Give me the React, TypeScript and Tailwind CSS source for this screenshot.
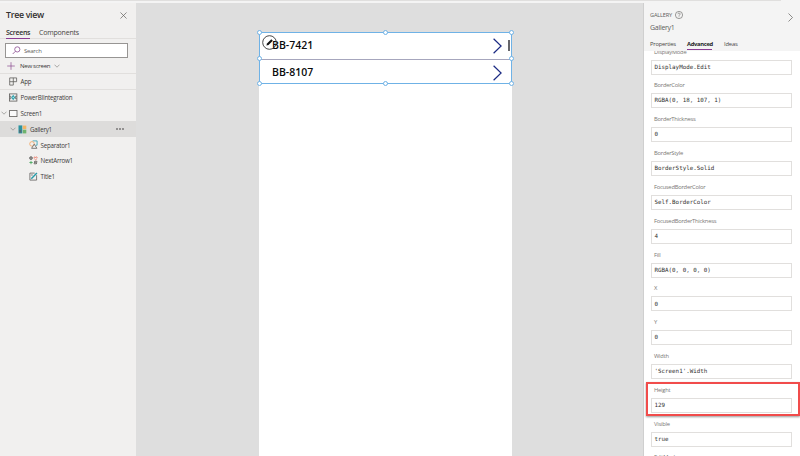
import type { ReactNode } from "react";

const ui = "font-['Open_Sans','Noto_Sans',sans-serif]";

const fields: [string, string][] = [
  ["DisplayMode", "DisplayMode.Edit"],
  ["BorderColor", "RGBA(0, 18, 107, 1)"],
  ["BorderThickness", "0"],
  ["BorderStyle", "BorderStyle.Solid"],
  ["FocusedBorderColor", "Self.BorderColor"],
  ["FocusedBorderThickness", "4"],
  ["Fill", "RGBA(0, 0, 0, 0)"],
  ["X", "0"],
  ["Y", "0"],
  ["Width", "'Screen1'.Width"],
  ["Height", "129"],
  ["Visible", "true"],
  ["EditMode", ""],
];

function Chevron({ className = "" }: { className?: string }) {
  return (
    <svg viewBox="0 0 6 4" className={`h-1 w-1.5 shrink-0 ${className}`} fill="none" stroke="#8a8886" strokeWidth=".7">
      <path d="M.5 .7 3 3.2 5.5 .7" />
    </svg>
  );
}

function Icon({ children }: { children: ReactNode }) {
  return (
    <svg viewBox="0 0 9 9" className="size-[9px] shrink-0" fill="none" stroke="#605e5c" strokeWidth=".8">
      {children}
    </svg>
  );
}

function AppIcon() {
  return (
    <Icon>
      <path d="M.7 .9h6.9v3.8H.7M.7 .9v7.2h3.6V.9" />
    </Icon>
  );
}

function IntegrationIcon() {
  return (
    <Icon>
      <rect x=".5" y=".9" width="7.4" height="7.2" />
      <path d="M.5 3.2h1.3v2.6H.5M7.9 3.2H6.6v2.6h1.3" />
      <path d="M4.2 1.8 6.2 4.5 4.2 7.2 2.2 4.5z" fill="#2aa0ac" stroke="none" />
      <circle cx="4.2" cy="4.5" r=".7" fill="#c7eef0" stroke="none" />
    </Icon>
  );
}

function ScreenIcon() {
  return (
    <Icon>
      <rect x=".6" y="1.4" width="7.4" height="6.2" fill="#fafafa" />
    </Icon>
  );
}

function GalleryIcon() {
  return (
    <Icon>
      <g stroke="none">
        <rect x=".5" y=".4" width="3.8" height="8" fill="#2b93a0" />
        <rect x="1.2" y="5" width="2.2" height="2.6" fill="#5a6672" />
        <rect x="4.8" y=".6" width="3.5" height="3.5" fill="#f2b565" />
        <rect x="4.8" y="4.7" width="3.5" height="3.7" fill="#6fb36c" />
      </g>
    </Icon>
  );
}

function ShapesIcon() {
  return (
    <Icon>
      <path d="M3.6 .9h4.5v4.3H6.6" stroke="#2a9dad" />
      <circle cx="3" cy="3.9" r="2.3" stroke="#f0a35e" />
      <path d="M5.2 4.2 7.9 8.3H2.6z" fill="#f3f2f1" />
    </Icon>
  );
}

function ArrowsIcon() {
  return (
    <Icon>
      <circle cx="2" cy="2.1" r="1.4" fill="#605e5c" fillOpacity=".6" />
      <path d="M4.9 2.2c0-1.4 1.3-1.7 1.7-.7.5-1 1.8-.6 1.7.6M5.3 2.7l1.3 1.2 1.3-1.2" stroke="#e8654f" />
      <path d="M2 4.9v3.3M.4 6.5h3.3" stroke="#3da254" />
      <path d="M5.1 7.8h2.2l.7-2.5H5.8zM5 5.6l2.9 2" />
    </Icon>
  );
}

function TitleIcon() {
  return (
    <Icon>
      <path d="M7.6 3.2v4.9H.9V1.1h4.8" />
      <path d="M2.3 6.8 7.9.9" stroke="#259aa8" strokeWidth="1.4" />
      <path d="M2.1 3h1.7" />
    </Icon>
  );
}

function TreeRow({
  icon,
  label,
  pad,
  chevron,
  line,
  selected,
}: {
  icon: ReactNode;
  label: string;
  pad: string;
  chevron?: boolean;
  line?: boolean;
  selected?: boolean;
}) {
  return (
    <div
      className={`flex h-[15.75px] shrink-0 items-center ${pad} ${line ? "border-b border-[#e1dfdd]" : ""} ${
        selected ? "bg-[#dddcdb]" : ""
      }`}
    >
      {chevron && <Chevron className="mr-0.5" />}
      {icon}
      <span className="ml-[3px] pt-[0.6px] text-[6.2px] tracking-[-0.22px] text-[#3b3a39]">{label}</span>
      {selected && (
        <svg viewBox="0 0 8 2" className="mr-[12px] ml-auto h-[2px] w-[8px]" fill="#323130">
          <circle cx="1" cy="1" r=".8" />
          <circle cx="4" cy="1" r=".8" />
          <circle cx="7" cy="1" r=".8" />
        </svg>
      )}
    </div>
  );
}

function TreePanel() {
  return (
    <aside className="flex w-[136px] shrink-0 flex-col bg-[#f1f0ef]">
      <header className="flex h-[23px] items-center justify-between pr-[9px] pl-[6px]">
        <h1 className="pt-[3px] text-[8.8px] font-semibold tracking-[-0.3px] text-[#323130]">Tree view</h1>
        <svg viewBox="0 0 6 6" className="mt-[2px] size-[7px]" stroke="#605e5c" strokeWidth=".6">
          <path d="M.4.4 5.6 5.6M5.6.4.4 5.6" />
        </svg>
      </header>
      <nav className="flex h-[13px] gap-[9px] border-b border-[#e1dfdd] pl-[6px] text-[7px] leading-[13px] text-[#484644]">
        <span className="h-[13px] w-6 border-b border-[#8a3c93] font-semibold tracking-[-0.3px] whitespace-nowrap text-[#323130]">
          Screens
        </span>
        <span className="tracking-[-0.2px]">Components</span>
      </nav>
      <div className="mt-[4px] ml-[5px] flex h-[15px] w-[123px] shrink-0 items-center border border-[#979593] bg-white pl-[6px]">
        <svg viewBox="0 0 9 9" className="size-[9px]" fill="none" stroke="#8a4b91" strokeWidth=".8">
          <circle cx="5.3" cy="3.4" r="2.6" />
          <path d="M3.4 5.3.7 8" />
        </svg>
        <span className="ml-[3px] pt-px text-[6px] tracking-[-0.22px] text-[#605e5c]">Search</span>
      </div>
      <div className="flex h-[16px] shrink-0 items-center border-b border-[#e1dfdd] pl-[7px] text-[6.1px] text-[#3b3a39]">
        <svg viewBox="0 0 8 8" className="size-2" stroke="#8a4b91" strokeWidth=".7">
          <path d="M4 .2v7.6M.2 4h7.6" />
        </svg>
        <span className="ml-[5px] pt-px tracking-[-0.3px]">New screen</span>
        <Chevron className="ml-[4px]" />
      </div>
      <TreeRow icon={<AppIcon />} label="App" pad="pl-[8.5px]" line />
      <TreeRow icon={<IntegrationIcon />} label="PowerBIIntegration" pad="pl-[8.5px]" />
      <TreeRow icon={<ScreenIcon />} label="Screen1" pad="pl-[0.5px]" chevron />
      <TreeRow icon={<GalleryIcon />} label="Gallery1" pad="pl-[10px]" chevron selected />
      <TreeRow icon={<ShapesIcon />} label="Separator1" pad="pl-[28.5px]" />
      <TreeRow icon={<ArrowsIcon />} label="NextArrow1" pad="pl-[28.5px]" />
      <TreeRow icon={<TitleIcon />} label="Title1" pad="pl-[28.5px]" />
    </aside>
  );
}

function Handle({ className }: { className: string }) {
  return <i className={`absolute size-[5px] rounded-full border border-[#6fb2e6] bg-white ${className}`} />;
}

function GalleryItem({ label, className }: { label: string; className: string }) {
  return (
    <div className={`flex items-center justify-between pr-[9px] pl-[12px] ${className}`}>
      <span className="text-[10.5px] leading-none font-semibold text-[#0a0a0a]">{label}</span>
      <svg viewBox="0 0 9 16" className="h-4 w-[9px]" fill="none" stroke="#1b2a83" strokeWidth="1.2">
        <path d="M.6.7 8.1 8 .6 15.3" />
      </svg>
    </div>
  );
}

function Canvas() {
  return (
    <main className="min-w-0 flex-1 border-r border-[#cfcfcf] bg-[#dedede] pt-[29px] pl-[123px]">
      <div className="h-full w-[253px] bg-white">
        <section className="relative h-[52px] border border-[#6fb2e6]">
          <GalleryItem label="BB-7421" className="h-[27px] border-b border-[#a6a6bd] pb-px" />
          <GalleryItem label="BB-8107" className="h-[26px] pb-px" />
          <svg viewBox="0 0 15 15" className="absolute top-[2px] left-[2px] size-[15px]" fill="none" stroke="#333">
            <circle cx="7.5" cy="7.5" r="6.8" strokeWidth=".9" />
            <path d="m4.4 10.6.6-2.1 4.3-4.3 1.5 1.5-4.3 4.3z" fill="#111" stroke="none" />
          </svg>
          <i className="absolute top-[7px] right-[1px] h-[11px] w-[2px] bg-[#66666a]" />
          <Handle className="-top-[3px] -left-[3px]" />
          <Handle className="-top-[3px] left-[123px]" />
          <Handle className="-top-[3px] -right-[3px]" />
          <Handle className="top-[23px] -left-[3px]" />
          <Handle className="top-[23px] -right-[3px]" />
          <Handle className="-bottom-[3px] -left-[3px]" />
          <Handle className="-bottom-[3px] left-[123px]" />
          <Handle className="-right-[3px] -bottom-[3px]" />
        </section>
      </div>
    </main>
  );
}

function Field({ label, value }: { label: string; value: string }) {
  return (
    <div className="relative h-[33.85px] shrink-0 pl-[7px]">
      <div
        className={`h-[14px] pl-[3px] text-[5.8px] tracking-[-0.24px] text-[#797775] ${
          label === "EditMode" ? "leading-[10.5px]" : "leading-[12px]"
        }`}
      >
        {label}
      </div>
      <div className="flex h-[15px] w-[141px] items-center border border-[#e1dfdd] bg-white pl-[2.5px] font-['DejaVu_Sans_Mono',monospace] text-[5.85px] whitespace-pre text-[#323130]">
        {value}
      </div>
      {label === "Height" && (
        <div className="absolute -top-[2px] left-[2px] h-[34px] w-[154px] border-2 border-[#f14c4b] shadow-[0_1px_2px_#0006]" />
      )}
    </div>
  );
}

function PropertiesPanel() {
  return (
    <aside className="flex w-[156px] shrink-0 flex-col overflow-hidden bg-white">
      <header className="flex h-[48px] shrink-0 flex-col bg-[#f4f4f4] pl-[6px]">
        <div className="mt-[8px] flex h-[9px] items-center text-[5.6px] tracking-[-0.18px] text-[#605e5c]">
          GALLERY
          <svg viewBox="0 0 8 8" className="-mt-px ml-[3px] size-2" fill="none" stroke="#605e5c" strokeWidth=".6">
            <circle cx="4" cy="4" r="3.6" />
            <path d="M2.9 3.2c0-1.6 2.3-1.5 2.2 0C5 4 4 4 4 4.8M4 5.4v.7" />
          </svg>
          <svg viewBox="0 0 5 9" className="mt-[4px] mr-[7.5px] ml-auto h-[9px] w-[5px]" fill="none" stroke="#605e5c" strokeWidth=".7">
            <path d="M.5.5 4.5 4.5.5 8.5" />
          </svg>
        </div>
        <div className="mt-[3px] text-[7px] leading-[10px] tracking-[-0.28px] text-[#605e5c]">Gallery1</div>
        <nav className="mt-auto flex h-[13px] text-[5.8px] leading-[12px] text-[#484644]">
          <span className="w-[37px] tracking-[-0.22px]">Properties</span>
          <span className="h-[12px] w-[25px] border-b border-[#8a3c93] font-bold tracking-[-0.3px] whitespace-nowrap text-[#201f1e]">
            Advanced
          </span>
          <span className="ml-[12px] tracking-[-0.18px]">Ideas</span>
        </nav>
      </header>
      <div className="flex min-h-0 flex-1 flex-col overflow-hidden">
        <div className="-mt-[5.5px] flex flex-col">
          {fields.map(([label, value]) => (
            <Field key={label} label={label} value={value} />
          ))}
        </div>
      </div>
    </aside>
  );
}

export default function App() {
  return (
    <div className={`flex h-[456px] w-[800px] flex-col overflow-hidden bg-[#f1f0ef] ${ui}`}>
      <div className="h-[3px] shrink-0 bg-[#f4f4f4]">
        <div className="h-px w-[781px] bg-[#e0dfde]" />
      </div>
      <div className="flex min-h-0 flex-1">
        <TreePanel />
        <Canvas />
        <PropertiesPanel />
      </div>
    </div>
  );
}
